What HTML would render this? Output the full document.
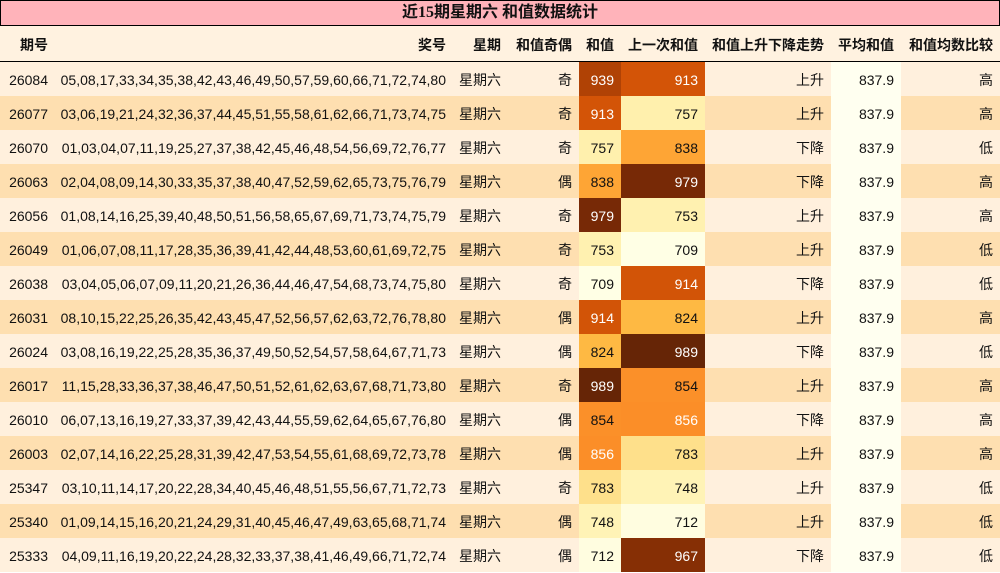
<!DOCTYPE html>
<html><head><meta charset="utf-8"><style>
body{margin:0;width:1000px;height:573px;overflow:hidden;background:#fff;font-family:"Liberation Sans","Noto Sans CJK SC",sans-serif;font-size:14px;color:#111}
.t{height:24px;line-height:24px;background:#ffb3ba;border:1px solid #000;text-align:center;font-weight:bold;font-size:16px;font-family:"Liberation Serif","Noto Sans CJK SC",serif}
table{border-collapse:collapse;table-layout:fixed;width:1000px}
td,th{padding:2px 7px 0 0;text-align:right;height:32px;white-space:nowrap;overflow:hidden}
td:nth-child(2),th:nth-child(2){padding-right:9px}
th{height:33px;background:#fff2e0;border-bottom:1px solid #000;font-weight:bold}
tr.o td{background:#fff0dd}tr.e td{background:#fedfb0}
td.a{background:#fffff0!important}
.w{color:#fff}
</style></head><body>
<div class="t">近15期星期六 和值数据统计</div>
<table>
<colgroup><col style="width:55px"><col style="width:400px"><col style="width:53px"><col style="width:71px"><col style="width:42px"><col style="width:84px"><col style="width:126px"><col style="width:70px"><col style="width:99px"></colgroup>
<tr><th>期号</th><th>奖号</th><th>星期</th><th>和值奇偶</th><th>和值</th><th>上一次和值</th><th>和值上升下降走势</th><th>平均和值</th><th>和值均数比较</th></tr>
<tr class="o"><td>26084</td><td>05,08,17,33,34,35,38,42,43,46,49,50,57,59,60,66,71,72,74,80</td><td>星期六</td><td>奇</td><td class="w" style="background:#b04205">939</td><td class="w" style="background:#d35407">913</td><td>上升</td><td class="a">837.9</td><td>高</td></tr>
<tr class="e"><td>26077</td><td>03,06,19,21,24,32,36,37,44,45,51,55,58,61,62,66,71,73,74,75</td><td>星期六</td><td>奇</td><td class="w" style="background:#d35407">913</td><td style="background:#fff0ad">757</td><td>上升</td><td class="a">837.9</td><td>高</td></tr>
<tr class="o"><td>26070</td><td>01,03,04,07,11,19,25,27,37,38,42,45,46,48,54,56,69,72,76,77</td><td>星期六</td><td>奇</td><td style="background:#fff0ad">757</td><td style="background:#fea535">838</td><td>下降</td><td class="a">837.9</td><td>低</td></tr>
<tr class="e"><td>26063</td><td>02,04,08,09,14,30,33,35,37,38,40,47,52,59,62,65,73,75,76,79</td><td>星期六</td><td>偶</td><td style="background:#fea535">838</td><td class="w" style="background:#772906">979</td><td>下降</td><td class="a">837.9</td><td>高</td></tr>
<tr class="o"><td>26056</td><td>01,08,14,16,25,39,40,48,50,51,56,58,65,67,69,71,73,74,75,79</td><td>星期六</td><td>奇</td><td class="w" style="background:#772906">979</td><td style="background:#fff1b0">753</td><td>上升</td><td class="a">837.9</td><td>高</td></tr>
<tr class="e"><td>26049</td><td>01,06,07,08,11,17,28,35,36,39,41,42,44,48,53,60,61,69,72,75</td><td>星期六</td><td>奇</td><td style="background:#fff1b0">753</td><td style="background:#ffffe5">709</td><td>上升</td><td class="a">837.9</td><td>低</td></tr>
<tr class="o"><td>26038</td><td>03,04,05,06,07,09,11,20,21,26,36,44,46,47,54,68,73,74,75,80</td><td>星期六</td><td>奇</td><td style="background:#ffffe5">709</td><td class="w" style="background:#d25407">914</td><td>下降</td><td class="a">837.9</td><td>低</td></tr>
<tr class="e"><td>26031</td><td>08,10,15,22,25,26,35,42,43,45,47,52,56,57,62,63,72,76,78,80</td><td>星期六</td><td>偶</td><td class="w" style="background:#d25407">914</td><td style="background:#feb943">824</td><td>上升</td><td class="a">837.9</td><td>高</td></tr>
<tr class="o"><td>26024</td><td>03,08,16,19,22,25,28,35,36,37,49,50,52,54,57,58,64,67,71,73</td><td>星期六</td><td>偶</td><td style="background:#feb943">824</td><td class="w" style="background:#662506">989</td><td>下降</td><td class="a">837.9</td><td>低</td></tr>
<tr class="e"><td>26017</td><td>11,15,28,33,36,37,38,46,47,50,51,52,61,62,63,67,68,71,73,80</td><td>星期六</td><td>奇</td><td class="w" style="background:#662506">989</td><td style="background:#fb9029">854</td><td>上升</td><td class="a">837.9</td><td>高</td></tr>
<tr class="o"><td>26010</td><td>06,07,13,16,19,27,33,37,39,42,43,44,55,59,62,64,65,67,76,80</td><td>星期六</td><td>偶</td><td style="background:#fb9029">854</td><td class="w" style="background:#fb8e28">856</td><td>下降</td><td class="a">837.9</td><td>高</td></tr>
<tr class="e"><td>26003</td><td>02,07,14,16,22,25,28,31,39,42,47,53,54,55,61,68,69,72,73,78</td><td>星期六</td><td>偶</td><td class="w" style="background:#fb8e28">856</td><td style="background:#fee08b">783</td><td>上升</td><td class="a">837.9</td><td>高</td></tr>
<tr class="o"><td>25347</td><td>03,10,11,14,17,20,22,28,34,40,45,46,48,51,55,56,67,71,72,73</td><td>星期六</td><td>奇</td><td style="background:#fee08b">783</td><td style="background:#fff3b6">748</td><td>上升</td><td class="a">837.9</td><td>低</td></tr>
<tr class="e"><td>25340</td><td>01,09,14,15,16,20,21,24,29,31,40,45,46,47,49,63,65,68,71,74</td><td>星期六</td><td>偶</td><td style="background:#fff3b6">748</td><td style="background:#fffde0">712</td><td>上升</td><td class="a">837.9</td><td>低</td></tr>
<tr class="o"><td>25333</td><td>04,09,11,16,19,20,22,24,28,32,33,37,38,41,46,49,66,71,72,74</td><td>星期六</td><td>偶</td><td style="background:#fffde0">712</td><td class="w" style="background:#862f05">967</td><td>下降</td><td class="a">837.9</td><td>低</td></tr>
</table>
</body></html>
